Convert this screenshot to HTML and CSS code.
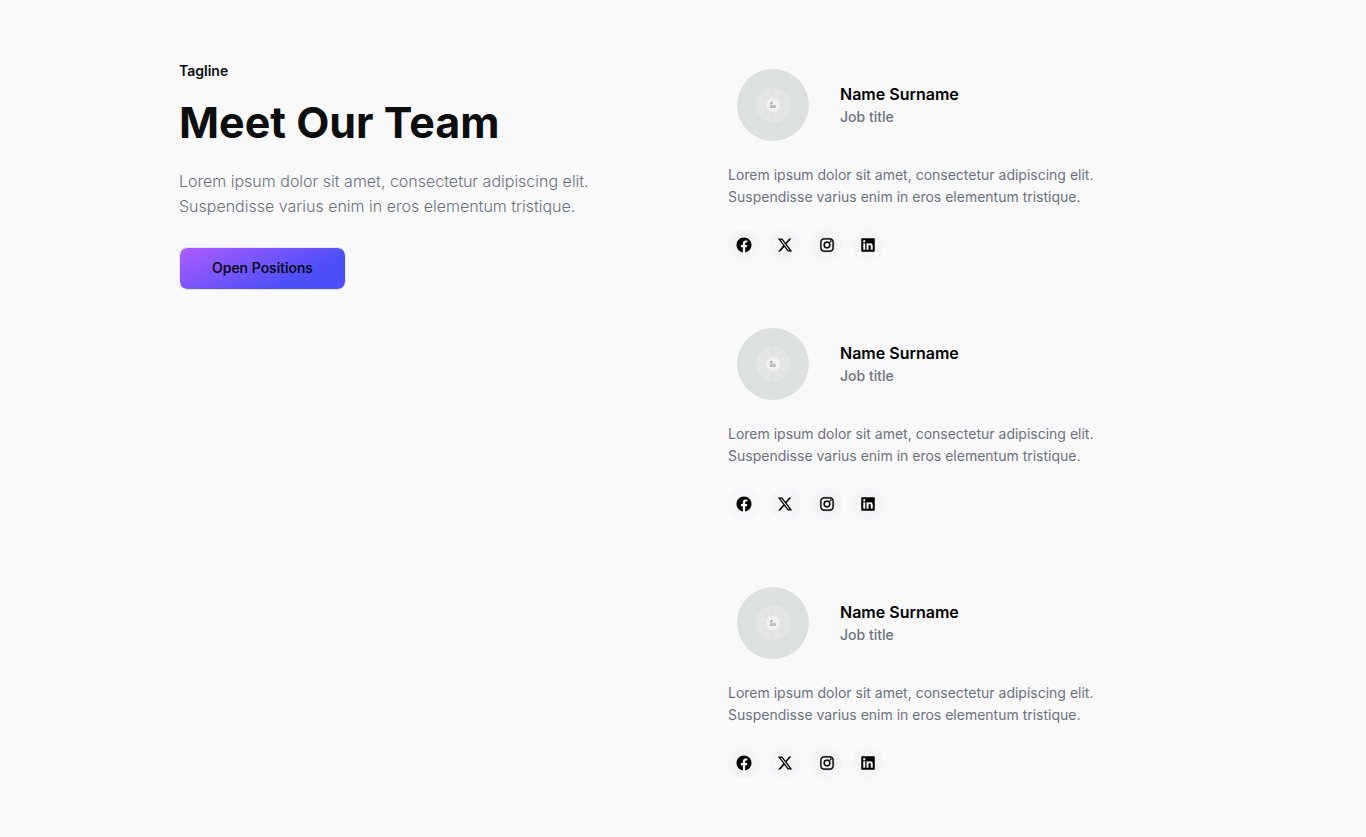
FILE: index.html
```html
<!DOCTYPE html>
<html lang="en">
<head>
<meta charset="utf-8">
<meta name="viewport" content="width=device-width, initial-scale=1">
<title>Meet Our Team</title>
<link rel="stylesheet" href="styles.css">
</head>
<body>
<svg class="sprite" aria-hidden="true">
  <symbol id="facebook" viewBox="0 0 24 24"><path d="M12.001 2.002c-5.522 0-9.999 4.477-9.999 9.999 0 4.99 3.656 9.126 8.437 9.879v-6.988h-2.54v-2.891h2.54V9.798c0-2.508 1.493-3.891 3.776-3.891 1.094 0 2.24.195 2.24.195v2.459h-1.264c-1.24 0-1.628.772-1.628 1.563v1.875h2.771l-.443 2.891h-2.328v6.988C18.344 21.129 22 16.992 22 12.001c0-5.522-4.477-9.999-9.999-9.999z"/></symbol>
  <symbol id="x" viewBox="0 0 512 512"><path d="M389.2 48h70.6L305.6 224.2 487 464H345L233.7 318.6 106.5 464H35.8L200.7 275.5 26.8 48H172.4L272.9 180.9 389.2 48zM364.4 421.8h39.1L151.1 88h-42L364.4 421.8z"/></symbol>
  <symbol id="instagram" viewBox="0 0 24 24"><g stroke="currentColor" stroke-width=".4"><path d="M11.999 7.377a4.623 4.623 0 1 0 0 9.248 4.623 4.623 0 0 0 0-9.248zm0 7.627a3.004 3.004 0 1 1 0-6.008 3.004 3.004 0 0 1 0 6.008z"/><circle cx="16.806" cy="7.207" r="1.078"/><path d="M20.533 6.111A4.605 4.605 0 0 0 17.9 3.479a6.606 6.606 0 0 0-2.186-.42c-.963-.042-1.268-.054-3.71-.054s-2.755 0-3.71.054a6.554 6.554 0 0 0-2.184.42 4.6 4.6 0 0 0-2.633 2.632 6.585 6.585 0 0 0-.419 2.186c-.043.962-.056 1.267-.056 3.71 0 2.442 0 2.753.056 3.71.015.748.156 1.486.419 2.187a4.61 4.61 0 0 0 2.634 2.632 6.584 6.584 0 0 0 2.185.45c.963.042 1.268.055 3.71.055s2.755 0 3.71-.055a6.615 6.615 0 0 0 2.186-.419 4.613 4.613 0 0 0 2.633-2.633c.263-.7.404-1.438.419-2.186.043-.962.056-1.267.056-3.71s0-2.753-.056-3.71a6.581 6.581 0 0 0-.421-2.217zm-1.218 9.532a5.043 5.043 0 0 1-.311 1.688 2.987 2.987 0 0 1-1.712 1.711 4.985 4.985 0 0 1-1.67.311c-.95.044-1.218.055-3.654.055-2.438 0-2.687 0-3.655-.055a4.96 4.96 0 0 1-1.669-.311 2.985 2.985 0 0 1-1.719-1.711 5.08 5.08 0 0 1-.311-1.669c-.043-.95-.053-1.218-.053-3.654 0-2.437 0-2.686.053-3.655a5.038 5.038 0 0 1 .311-1.687c.305-.789.93-1.41 1.719-1.712a5.01 5.01 0 0 1 1.669-.311c.951-.043 1.218-.055 3.655-.055s2.687 0 3.654.055a4.96 4.96 0 0 1 1.67.311 2.991 2.991 0 0 1 1.712 1.712 5.08 5.08 0 0 1 .311 1.669c.043.951.055 1.218.055 3.655 0 2.436 0 2.698-.043 3.654h-.011z"/></g></symbol>
  <symbol id="linkedin" viewBox="0 0 24 24"><path d="M20 3H4a1 1 0 0 0-1 1v16a1 1 0 0 0 1 1h16a1 1 0 0 0 1-1V4a1 1 0 0 0-1-1zM8.339 18.337H5.667v-8.59h2.672v8.59zM7.003 8.574a1.548 1.548 0 1 1 0-3.096 1.548 1.548 0 0 1 0 3.096zm11.335 9.763h-2.669V14.16c0-.996-.018-2.277-1.388-2.277-1.39 0-1.601 1.086-1.601 2.207v4.248h-2.667v-8.59h2.56v1.174h.037c.355-.675 1.227-1.387 2.524-1.387 2.704 0 3.203 1.778 3.203 4.092v4.71z"/></symbol>
  <symbol id="avatar" viewBox="0 0 72 72">
    <circle cx="36" cy="36" r="36" fill="#dce0df"/>
    <circle cx="36" cy="36" r="17.5" fill="#e3e6e5"/>
    <path d="M36 9v54M9 36h54M14 14l44 44M58 14L14 58" stroke="#d5d9d8" stroke-width=".5" fill="none"/>
    <circle cx="36" cy="36" r="7" fill="#f1f2f2"/>
    <path d="M33 35.5h2.2l1 .9 1-1 1.8 1.4v2.2h-6z" fill="#bcbfbe"/>
    <circle cx="34.4" cy="33.9" r="1.2" fill="#a3a6a5"/>
  </symbol>
</svg>
<main class="team">
  <section class="intro">
    <p class="tagline">Tagline</p>
    <h1 class="title">Meet Our Team</h1>
    <p class="lead">Lorem ipsum dolor sit amet, consectetur adipiscing elit. Suspendisse varius enim in eros elementum tristique.</p>
    <button class="cta" type="button">Open Positions</button>
  </section>
  <section class="members" aria-label="Team members">
    <article class="member">
      <header class="person">
        <svg class="avatar" role="img" aria-label="Portrait"><use href="#avatar"/></svg>
        <div><h2 class="name">Name Surname</h2><p class="job">Job title</p></div>
      </header>
      <p class="bio">Lorem ipsum dolor sit amet, consectetur adipiscing elit. Suspendisse varius enim in eros elementum tristique.</p>
      <nav class="social" aria-label="Social profiles">
        <a class="link" href="#" aria-label="Facebook"><svg class="icon"><use href="#facebook"/></svg></a>
        <a class="link" href="#" aria-label="X"><svg class="icon icon-x"><use href="#x"/></svg></a>
        <a class="link" href="#" aria-label="Instagram"><svg class="icon"><use href="#instagram"/></svg></a>
        <a class="link" href="#" aria-label="LinkedIn"><svg class="icon"><use href="#linkedin"/></svg></a>
      </nav>
    </article>
    <article class="member">
      <header class="person">
        <svg class="avatar" role="img" aria-label="Portrait"><use href="#avatar"/></svg>
        <div><h2 class="name">Name Surname</h2><p class="job">Job title</p></div>
      </header>
      <p class="bio">Lorem ipsum dolor sit amet, consectetur adipiscing elit. Suspendisse varius enim in eros elementum tristique.</p>
      <nav class="social" aria-label="Social profiles">
        <a class="link" href="#" aria-label="Facebook"><svg class="icon"><use href="#facebook"/></svg></a>
        <a class="link" href="#" aria-label="X"><svg class="icon icon-x"><use href="#x"/></svg></a>
        <a class="link" href="#" aria-label="Instagram"><svg class="icon"><use href="#instagram"/></svg></a>
        <a class="link" href="#" aria-label="LinkedIn"><svg class="icon"><use href="#linkedin"/></svg></a>
      </nav>
    </article>
    <article class="member">
      <header class="person">
        <svg class="avatar" role="img" aria-label="Portrait"><use href="#avatar"/></svg>
        <div><h2 class="name">Name Surname</h2><p class="job">Job title</p></div>
      </header>
      <p class="bio">Lorem ipsum dolor sit amet, consectetur adipiscing elit. Suspendisse varius enim in eros elementum tristique.</p>
      <nav class="social" aria-label="Social profiles">
        <a class="link" href="#" aria-label="Facebook"><svg class="icon"><use href="#facebook"/></svg></a>
        <a class="link" href="#" aria-label="X"><svg class="icon icon-x"><use href="#x"/></svg></a>
        <a class="link" href="#" aria-label="Instagram"><svg class="icon"><use href="#instagram"/></svg></a>
        <a class="link" href="#" aria-label="LinkedIn"><svg class="icon"><use href="#linkedin"/></svg></a>
      </nav>
    </article>
  </section>
</main>
</body>
</html>
```
FILE: styles.css
```css
* { box-sizing: border-box; }

body {
  margin: 0;
  background: #f9f9f9;
  color: #000;
  font-family: Inter, "Liberation Sans", sans-serif;
}

h1, h2, p { margin: 0; }

.sprite { display: none; }

.team {
  display: grid;
  grid-template-columns: 1fr 1fr;
  gap: 90px;
  max-width: 1008px;
  margin: 0 auto;
  padding: 60px 0 56px;
}

.tagline {
  margin-bottom: 14px;
  font-size: 14px;
  font-weight: 600;
  line-height: 22px;
  color: #0b0d0e;
}

.title {
  margin-bottom: 21px;
  font-size: 43px;
  font-weight: 700;
  line-height: 52px;
  color: #0b0d0e;
}

.lead {
  margin-bottom: 28px;
  font-size: 16px;
  font-weight: 300;
  line-height: 25px;
  color: #6b7280;
}

.cta {
  height: 43px;
  padding: 0 32px 2px;
  border: 1px solid #e5e7eb;
  border-radius: 8px;
  background: linear-gradient(155deg, #ad5cff 0%, #4f4ff9 70%) padding-box;
  color: #000;
  font: 500 14px/20px Inter, "Liberation Sans", sans-serif;
}

.members {
  display: flex;
  flex-direction: column;
  gap: 67px;
  padding-top: 9px;
}

.person {
  display: flex;
  align-items: center;
  gap: 31px;
  padding-left: 9px;
  margin-bottom: 23px;
}

.avatar {
  flex: none;
  width: 72px;
  height: 72px;
}

.name {
  font-size: 16px;
  font-weight: 600;
  line-height: 24px;
}

.job {
  font-size: 14px;
  font-weight: 500;
  line-height: 22px;
  color: #6b7280;
}

.bio {
  max-width: 420px;
  margin-bottom: 21px;
  font-size: 14px;
  line-height: 22px;
  color: #6b7280;
}

.social {
  display: flex;
  justify-content: space-between;
  width: 156px;
}

.link {
  display: grid;
  place-items: center;
  width: 32px;
  height: 32px;
  border-radius: 50%;
  background: #f5f5f7;
  color: #000;
}

.icon {
  width: 18px;
  height: 18px;
  fill: currentColor;
}

.icon-x {
  width: 16px;
  height: 16px;
}

@media (max-width: 760px) {
  .team {
    grid-template-columns: 1fr;
    padding: 48px 24px;
    gap: 48px;
  }
}
```
